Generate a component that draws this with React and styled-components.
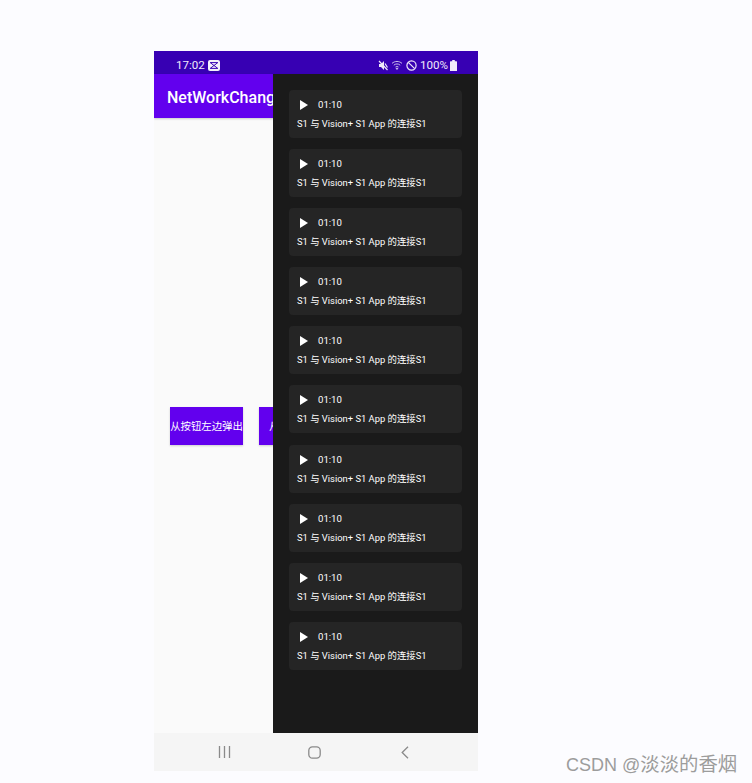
import React from "react";
import styled, { createGlobalStyle } from "styled-components";

const GlobalStyle = createGlobalStyle`
  html, body {
    margin: 0;
    padding: 0;
    background: #fcfcff;
    font-family: Roboto, "Noto Sans CJK SC", sans-serif;
  }
`;

const Page = styled.div`
  position: relative;
  width: 752px;
  height: 783px;
  padding: 51px 0 0 154px;
  box-sizing: border-box;
  overflow: hidden;
`;

const Phone = styled.div`
  position: relative;
  width: 324px;
  height: 720px;
  display: flex;
  flex-direction: column;
  background: #fafafa;
  overflow: hidden;
`;

const StatusBar = styled.div`
  height: 23px;
  flex: none;
  box-sizing: border-box;
  display: flex;
  align-items: center;
  justify-content: space-between;
  padding: 5px 21px 0 22px;
  background: #3700b3;
  color: #f0eafa;
  font-size: 11.6px;
`;

const StatusGroup = styled.div`
  display: flex;
  align-items: center;
  gap: 3px;
`;

const AppBar = styled.div`
  height: 44px;
  flex: none;
  box-sizing: border-box;
  display: flex;
  align-items: center;
  padding: 2px 13px 0;
  background: #6200ee;
  color: #fff;
  font-size: 16px;
  font-weight: 500;
  white-space: nowrap;
  box-shadow: 0 1px 2px rgba(0, 0, 0, 0.2);
`;

const Main = styled.div`
  flex: 1;
  display: flex;
  align-items: center;
  gap: 16px;
  padding: 0 16px;
`;

const ActionButton = styled.div`
  flex: none;
  width: 73px;
  height: 38px;
  box-sizing: border-box;
  display: flex;
  align-items: center;
  justify-content: ${({ $inset }) => ($inset ? "flex-start" : "center")};
  padding-left: ${({ $inset }) => $inset || 0}px;
  background: #6200ee;
  color: #fff;
  font-size: 10.4px;
  white-space: nowrap;
  overflow: hidden;
  box-shadow: 0 1px 2px rgba(0, 0, 0, 0.18);
`;

const NavBar = styled.div`
  height: 38px;
  flex: none;
  box-sizing: border-box;
  display: grid;
  grid-template-columns: repeat(3, 90.6px);
  align-items: center;
  justify-items: center;
  padding-left: 25px;
  background: #f5f5f5;
`;

const Drawer = styled.div`
  position: absolute;
  top: 23px;
  right: 0;
  bottom: 38px;
  width: 205px;
  box-sizing: border-box;
  padding: 16px;
  display: flex;
  flex-direction: column;
  gap: 11.1px;
  background: #1a1a1a;
`;

const Card = styled.div`
  height: 48px;
  flex: none;
  box-sizing: border-box;
  padding: 7px 8px 0;
  border-radius: 4px;
  background: #252525;
  color: #fff;
`;

const PlayRow = styled.div`
  height: 16px;
  display: flex;
  align-items: center;
  gap: 10px;
  padding-left: 3px;
  font-size: 9.6px;
  line-height: 16px;
`;

const Title = styled.div`
  margin-top: 3px;
  font-size: 9.4px;
  line-height: 15px;
  white-space: nowrap;
`;

const Watermark = styled.div`
  position: absolute;
  left: 566px;
  top: 752px;
  color: #9c9c9c;
  font-family: "Liberation Sans", "Noto Sans CJK SC", sans-serif;
  font-size: 18px;
  line-height: 24px;
  white-space: nowrap;
`;

const WatermarkName = styled.span`
  font-size: 19.4px;
`;

const NoteIcon = () => (
  <svg width="12" height="11" viewBox="0 0 12 11">
    <rect width="12" height="11" rx="2" fill="#f4f0fb" />
    <path d="M2.2 2.6 9.8 8.4M9.8 2.6 2.2 8.4M2.2 2.6h7.6M2.2 8.4h7.6" fill="none" stroke="#3700b3" strokeWidth="1" />
  </svg>
);

const MuteIcon = () => (
  <svg width="11" height="11" viewBox="0 0 11 11">
    <path d="M2 4h2l3-3v9L4 7H2z" fill="#f0eafa" />
    <path d="M8 3.5 10.5 7.5M2 1 10.5 10" stroke="#f0eafa" strokeWidth="1.2" />
  </svg>
);

const WifiIcon = () => (
  <svg width="12" height="10" viewBox="0 0 12 10" fill="none" stroke="#d8cef0" strokeWidth="0.9">
    <path d="M1 3.4c2.8-2.6 7.2-2.6 10 0" />
    <path d="M2.8 5.2c1.9-1.7 4.5-1.7 6.4 0" />
    <path d="M4.5 7c.9-.8 2.1-.8 3 0" />
    <circle cx="6" cy="8.6" r="0.7" fill="#d8cef0" />
  </svg>
);

const BlockIcon = () => (
  <svg width="11" height="11" viewBox="0 0 11 11" fill="none" stroke="#f0eafa" strokeWidth="1.2">
    <circle cx="5.5" cy="5.5" r="4.6" />
    <path d="M2.3 2.3l6.4 6.4" />
  </svg>
);

const BatteryIcon = styled(({ className }) => (
  <svg className={className} width="7" height="11" viewBox="0 0 7 11">
    <path d="M2.2 0h2.6v1.2h1.6c.3 0 .6.3.6.6V11H0V1.8c0-.3.3-.6.6-.6h1.6z" fill="#f0eafa" />
  </svg>
))`
  margin-left: -1px;
`;

const PlayIcon = () => (
  <svg width="8" height="10" viewBox="0 0 8 10">
    <path d="M0 0l8 5-8 5z" fill="#fff" />
  </svg>
);

const RecentsIcon = () => (
  <svg width="13" height="12" viewBox="0 0 13 12" stroke="#8a8a8a" strokeWidth="1.3">
    <path d="M1.5 0v12M6.5 0v12M11.5 0v12" />
  </svg>
);

const HomeIcon = () => (
  <svg width="13" height="13" viewBox="0 0 13 13" fill="none" stroke="#8a8a8a" strokeWidth="1.3">
    <rect x="0.8" y="0.8" width="11.4" height="11.4" rx="3.6" />
  </svg>
);

const BackIcon = () => (
  <svg width="8" height="13" viewBox="0 0 8 13" fill="none" stroke="#8a8a8a" strokeWidth="1.3">
    <path d="M7 0.8 1.2 6.5 7 12.2" />
  </svg>
);

const items = Array.from({ length: 10 }, (_, i) => i);

const App = () => {
  return (
    <Page>
      <GlobalStyle />
      <Phone>
        <StatusBar>
          <StatusGroup>
            <span>17:02</span>
            <NoteIcon />
          </StatusGroup>
          <StatusGroup>
            <MuteIcon />
            <WifiIcon />
            <BlockIcon />
            <span>100%</span>
            <BatteryIcon />
          </StatusGroup>
        </StatusBar>
        <AppBar>NetWorkChangeListener</AppBar>
        <Main>
          <ActionButton>从按钮左边弹出</ActionButton>
          <ActionButton $inset={10}>从按钮右边弹出</ActionButton>
        </Main>
        <NavBar>
          <RecentsIcon />
          <HomeIcon />
          <BackIcon />
        </NavBar>
        <Drawer>
          {items.map((i) => (
            <Card key={i}>
              <PlayRow>
                <PlayIcon />
                <span>01:10</span>
              </PlayRow>
              <Title>S1 与 Vision+ S1 App 的连接S1</Title>
            </Card>
          ))}
        </Drawer>
      </Phone>
      <Watermark>
        CSDN @<WatermarkName>淡淡的香烟</WatermarkName>
      </Watermark>
    </Page>
  );
};

export default App;
